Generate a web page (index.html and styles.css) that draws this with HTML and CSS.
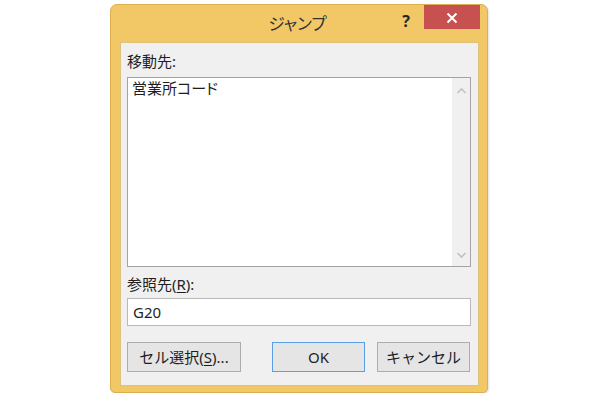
FILE: index.html
```html
<!DOCTYPE html>
<html lang="ja">
<head>
<meta charset="utf-8">
<title>ジャンプ</title>
<link rel="stylesheet" href="styles.css">
</head>
<body>
<div class="dialog">
  <div class="titlebar">
    <div class="tb-left"></div>
    <div class="title">ジャンプ</div>
    <div class="tb-right">
      <div class="help">?</div>
      <div class="close">
        <svg width="12" height="12" viewBox="0 0 12 12"><path d="M1.5 1.5 L10.5 10.5 M10.5 1.5 L1.5 10.5" stroke="#fff" stroke-width="2" fill="none"/></svg>
      </div>
    </div>
  </div>
  <div class="content">
    <div class="label">移動先:</div>
    <div class="listbox">
      <div class="items">
        <div class="item">営業所コード</div>
      </div>
      <div class="scrollbar">
        <svg class="arrow" width="17" height="17" viewBox="0 0 17 17"><path d="M4.5 10 L8.5 6 L12.5 10" stroke="#c2c2c2" stroke-width="1.6" fill="none"/></svg>
        <svg class="arrow" width="17" height="17" viewBox="0 0 17 17"><path d="M4.5 7 L8.5 11 L12.5 7" stroke="#c2c2c2" stroke-width="1.6" fill="none"/></svg>
      </div>
    </div>
    <div class="label label-ref">参照先(<u>R</u>):</div>
    <div class="input">G20</div>
    <div class="buttons">
      <div class="btn btn-select">セル選択(<u>S</u>)...</div>
      <div class="btn btn-default">OK</div>
      <div class="btn">キャンセル</div>
    </div>
  </div>
</div>
</body>
</html>
```

FILE: styles.css
```css
html, body {
  margin: 0;
  padding: 0;
  background: #ffffff;
}
body {
  font-family: "Noto Sans", "Noto Sans CJK JP", sans-serif;
  color: #1e1e1e;
}
.dialog {
  margin: 4px 0 0 110px;
  width: 378px;
  height: 389px;
  box-sizing: border-box;
  background: #f1c865;
  border: 1px solid #dcb050;
  border-radius: 7px 7px 5px 5px;
  padding: 0 8px 6px 9px;
  display: flex;
  flex-direction: column;
  box-shadow: 1px 1px 2px rgba(0,0,0,0.12);
}
.titlebar {
  height: 37px;
  display: grid;
  grid-template-columns: 1fr auto 1fr;
  margin-right: -1px;
}
.title {
  font-size: 16.5px;
  line-height: 37px;
  color: #333333;
  font-feature-settings: "palt";
  padding-right: 5px;
}
.tb-right {
  display: flex;
  justify-content: flex-end;
  align-items: flex-start;
}
.help {
  font-size: 16px;
  font-weight: bold;
  color: #262626;
  line-height: 16px;
  margin-top: 8px;
  margin-right: 14px;
}
.close {
  width: 56px;
  height: 24px;
  background: #c75050;
  display: flex;
  align-items: center;
  justify-content: center;
}
.close svg {
  display: block;
  margin-top: 1px;
}
.content {
  flex: 1;
  background: #f0f0f0;
  border: 1px solid #dfc27a;
  padding: 8px 7px 0 6px;
  display: flex;
  flex-direction: column;
}
.label {
  font-size: 15px;
  line-height: 20px;
  height: 20px;
  color: #1e1e1e;
}
.listbox {
  margin-top: 6px;
  height: 190px;
  box-sizing: border-box;
  border: 1px solid #a3a3a3;
  background: #ffffff;
  display: flex;
}
.items {
  flex: 1;
  padding: 1px 0 0 4px;
}
.item {
  font-size: 15px;
  line-height: 19px;
  font-feature-settings: "palt";
}
.scrollbar {
  width: 18px;
  background: #f0f0f0;
  display: flex;
  flex-direction: column;
  justify-content: space-between;
  align-items: center;
  padding: 5px 0 3px;
}
.arrow {
  display: block;
}
.label-ref {
  margin-top: 7px;
}
.label u, .btn u {
  text-decoration: underline;
  text-underline-offset: 2px;
}
.input {
  margin-top: 4px;
  height: 28px;
  box-sizing: border-box;
  border: 1px solid #b9b9b9;
  background: #ffffff;
  font-size: 15px;
  line-height: 26px;
  padding-left: 5px;
}
.buttons {
  margin-top: 16px;
  display: flex;
  gap: 12px;
}
.btn {
  height: 30px;
  width: 93px;
  box-sizing: border-box;
  border: 1px solid #adadad;
  background: #e5e5e5;
  font-size: 15px;
  line-height: 28px;
  text-align: center;
  color: #1e1e1e;
}
.btn-select {
  width: 114px;
  margin-right: 19px;
}
.btn-default {
  border-color: #5a9ee8;
}
```
